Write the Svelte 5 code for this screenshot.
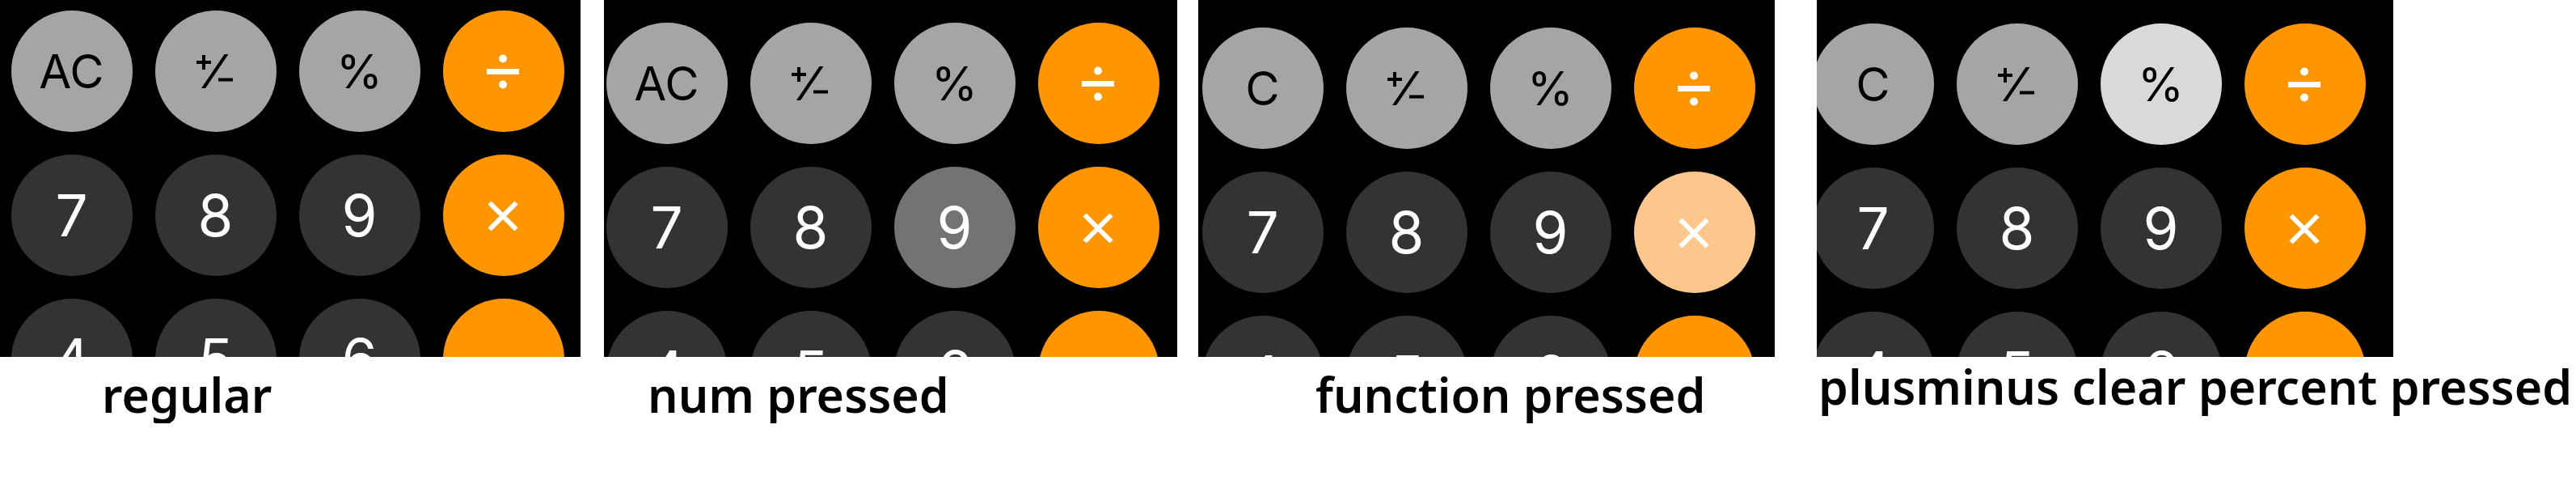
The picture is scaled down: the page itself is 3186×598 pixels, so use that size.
<script>
  const boards = [
    { id: 'regular', caption: 'regular', clear: 'AC', pressed: null },
    { id: 'number', caption: 'num pressed', clear: 'AC', pressed: '9' },
    { id: 'operator', caption: 'function pressed', clear: 'C', pressed: 'multiply' },
    { id: 'function', caption: 'plusminus clear percent pressed', clear: 'C', pressed: '%' }
  ];

  const keysFor = (clear) => [
    { name: clear, kind: 'function' },
    { name: 'plus minus', kind: 'function', icon: true },
    { name: '%', kind: 'function' },
    { name: 'divide', kind: 'operator', icon: true },
    { name: '7', kind: 'number' },
    { name: '8', kind: 'number' },
    { name: '9', kind: 'number' },
    { name: 'multiply', kind: 'operator', icon: true },
    { name: '4', kind: 'number' },
    { name: '5', kind: 'number' },
    { name: '6', kind: 'number' },
    { name: 'subtract', kind: 'operator', icon: true }
  ];
</script>

<main>
  {#each boards as board (board.id)}
    <figure class={board.id}>
      <div class="board">
        {#each keysFor(board.clear) as key (key.name)}
          <button
            type="button"
            class="key {key.kind}-key"
            class:pressed={board.pressed === key.name}
            aria-label={key.icon ? key.name : undefined}
          >
            {#if key.icon}
              <svg viewBox="-30 -30 60 60" aria-hidden="true">
                {#if key.name === 'plus minus'}
                  <path d="M-24 -11H-6M-15 -20V-2M3 10.5H21" stroke-width="4" />
                  <path class="solid" d="M10.5 -21H15.5L-13 21H-18Z" />
                {:else if key.name === 'divide'}
                  <path d="M-21 .5H19" stroke-width="7" />
                  <circle cx="-1" cy="-15.5" r="5" />
                  <circle cx="-1" cy="16.5" r="5" />
                {:else if key.name === 'multiply'}
                  <path d="M-17.5 -15.5L15.5 17.5M15.5 -15.5L-17.5 17.5" stroke-width="6" />
                {:else}
                  <path d="M-21 .5H19" stroke-width="7" />
                {/if}
              </svg>
            {:else}
              {key.name}
            {/if}
          </button>
        {/each}
      </div>
      <figcaption>{board.caption}</figcaption>
    </figure>
  {/each}
</main>

<style>
  :global(body) {
    margin: 0;
    background: #fff;
  }

  main {
    display: grid;
    grid-template-columns: 747fr 735fr 765fr 939fr;
    overflow: hidden;
  }

  figure {
    min-width: 0;
    margin: 0;
  }

  .board {
    display: grid;
    grid-template-columns: repeat(4, 150px);
    grid-auto-rows: 150px;
    gap: 28px;
    box-sizing: border-box;
    height: 441px;
    overflow: hidden;
    background: #000;
  }

  .regular .board {
    margin-right: 29px;
    padding: 13px 0 0 14px;
  }

  .number .board {
    margin-right: 26px;
    padding: 28px 0 0 3px;
  }

  .operator .board {
    margin-right: 52px;
    padding: 34px 0 0 5px;
  }

  .function .board {
    justify-content: end;
    margin-right: 226px;
    padding: 29px 34px 0 0;
  }

  .key {
    display: flex;
    align-items: center;
    justify-content: center;
    padding: 0 1px 0 0;
    border: 0;
    border-radius: 50%;
    font-family: Inter, "Liberation Sans", sans-serif;
    font-size: 71px;
    line-height: 80px;
    color: #fff;
  }

  .number-key {
    background: #333;
  }

  .number-key.pressed {
    background: #737373;
  }

  .function-key {
    background: #a5a5a5;
    font-size: 58px;
    color: #000;
  }

  .function-key.pressed {
    background: #d9d9d9;
  }

  .operator-key {
    background: #ff9500;
  }

  .operator-key.pressed {
    background: #fbc78d;
  }

  svg {
    width: 60px;
    height: 60px;
    margin-left: 1px;
    fill: currentColor;
    stroke: currentColor;
  }

  circle,
  .solid {
    stroke: none;
  }

  figcaption {
    padding: 10px 0 0 2px;
    font-family: "Noto Sans", "Open Sans", sans-serif;
    font-size: 59px;
    font-weight: 600;
    line-height: 72px;
    white-space: nowrap;
    color: #000;
  }

  .regular figcaption {
    padding-left: 126px;
  }

  .number figcaption {
    padding-left: 54px;
  }

  .operator figcaption {
    padding-left: 145px;
  }

  .function figcaption {
    padding-top: 0;
  }
</style>
